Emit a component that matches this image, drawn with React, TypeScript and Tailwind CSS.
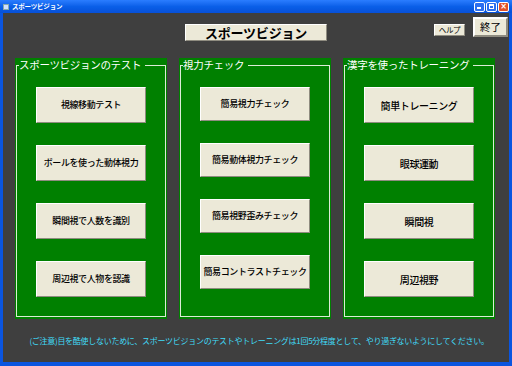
const jp = { fontFamily: '"Noto Sans CJK JP", "Noto Sans", sans-serif' };

const panels = [
  {
    title: "スポーツビジョンのテスト",
    text: "text-[9px]",
    h: "h-[36px]",
    items: ["視線移動テスト", "ボールを使った動体視力", "瞬間視で人数を識別", "周辺視で人物を認識"],
  },
  {
    title: "視力チェック",
    text: "text-[9px]",
    h: "h-[34px]",
    items: ["簡易視力チェック", "簡易動体視力チェック", "簡易視野歪みチェック", "簡易コントラストチェック"],
  },
  {
    title: "漢字を使ったトレーニング",
    text: "text-[10px]",
    h: "h-[36px]",
    items: ["簡単トレーニング", "眼球運動", "瞬間視", "周辺視野"],
  },
];

const bevel =
  "bg-[#ece9d8] border border-t-white border-l-white border-b-[#8f8c80] border-r-[#8f8c80]";

const TitleBar = () => (
  <div className="h-[13px] flex items-center bg-gradient-to-b from-[#2a7dff] via-[#0a5fe8] to-[#0750d8] px-[3px]">
    <div className="w-[6px] h-[6px] bg-[#cfe0ff] border border-[#8aa] mr-[3px]" />
    <span className="text-white text-[6.5px] font-bold leading-none tracking-[-0.2px]" style={jp}>
      スポーツビジョン
    </span>
    <div className="ml-auto flex gap-[1px] items-center">
      <div className="w-[11px] h-[10px] rounded-[2px] bg-[#2c6ff0] border border-white flex items-end justify-start p-[2px]">
        <div className="w-[4px] h-[1.5px] bg-white" />
      </div>
      <div className="w-[11px] h-[10px] rounded-[2px] bg-[#2c6ff0] border border-white flex items-center justify-center">
        <div className="w-[5px] h-[5px] border border-white border-t-2" />
      </div>
      <div className="w-[11px] h-[10px] rounded-[2px] bg-[#e0512a] border border-white flex items-center justify-center text-white text-[8px] font-bold leading-none" style={{ fontFamily: '"DejaVu Sans", sans-serif' }}>
        ×
      </div>
    </div>
  </div>
);

const Panel = ({ p }: { p: (typeof panels)[number] }) => (
  <div className="w-[152px] bg-[#008000] flex flex-col">
    <fieldset className="flex-1 ml-[1px] mr-[1px] mb-[2px] border border-[#dcecd6] m-0 p-0 min-w-0">
      <legend className="ml-[2px] pr-[4px] text-white text-[10.5px] leading-[14px] tracking-[-0.3px]" style={jp}>
        {p.title}
      </legend>
      <div className="flex flex-col items-center pt-[15px] gap-[22px]">
        {p.items.map((t) => (
          <div
            key={t}
            className={`${bevel} w-[110px] ${p.h} flex items-center justify-center text-black ${p.text} font-medium tracking-[-0.4px]`}
            style={jp}
          >
            {t}
          </div>
        ))}
      </div>
    </fieldset>
  </div>
);

export default function App() {
  return (
    <div className="w-[512px] h-[366px] bg-[#0a55e0] flex flex-col overflow-hidden">
      <TitleBar />
      <div className="flex-1 mx-[3px] mb-[4px] bg-[#3f3f3f] flex flex-col">
        <div className="h-[45px] grid grid-cols-[1fr_auto_1fr]">
          <div />
          <div className="pt-[11px]">
            <div
              className={`${bevel} w-[142px] h-[17px] flex items-center justify-center text-black text-[13px] font-bold leading-none tracking-[-0.2px]`}
              style={jp}
            >
              スポーツビジョン
            </div>
          </div>
          <div className="flex justify-end items-start pt-[4px] pr-[1px] gap-[8px]">
            <div
              className={`${bevel} mt-[7px] w-[31px] h-[12px] flex items-center justify-center text-black text-[7.5px] leading-none tracking-[-0.3px]`}
              style={jp}
            >
              ヘルプ
            </div>
            <div
              className={`${bevel} w-[35px] h-[20px] flex items-center justify-center text-black text-[10.5px] leading-none border-2`}
              style={jp}
            >
              終了
            </div>
          </div>
        </div>
        <div className="h-[261px] flex pl-[12px] gap-[12px]">
          {panels.map((p) => (
            <Panel key={p.title} p={p} />
          ))}
        </div>
        <div className="flex-1 flex items-center justify-center pl-[6px]">
          <p className="text-[#40dcf8] text-[8px] tracking-[-0.28px] leading-none" style={jp}>
            (ご注意)目を酷使しないために、スポーツビジョンのテストやトレーニングは1回5分程度として、やり過ぎないようにしてください。
          </p>
        </div>
      </div>
    </div>
  );
}
